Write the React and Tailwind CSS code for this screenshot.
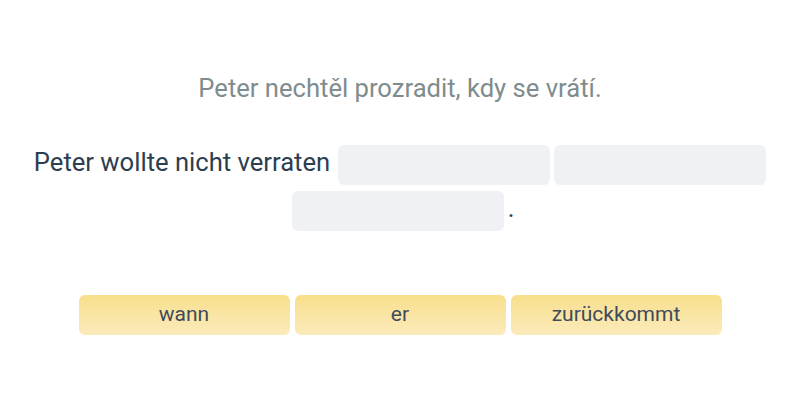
import React from 'react';

const words = ['wann', 'er', 'zurückkommt'];

function Blank({ className = '' }) {
  return <div className={`h-10 w-[212px] rounded-md bg-[#f0f1f5] ${className}`} />;
}

export default function App() {
  return (
    <div className="h-[400px] w-[800px] bg-white font-['Roboto',sans-serif]">
      <div className="pt-[72px] text-center text-[25.6px] leading-8 text-[#7f8c8d]">
        Peter nechtěl prozradit, kdy se vrátí.
      </div>

      <div className="mt-[41px] flex flex-wrap items-start justify-center gap-x-1 gap-y-1.5 px-6">
        <span className="mr-1 text-[25.6px] leading-[34px] text-[#2c3e50]">Peter wollte nicht verraten</span>
        <Blank />
        <Blank />
        <Blank className="ml-[6px]" />
        <span className="text-[25.6px] leading-[34px] text-[#2c3e50]">.</span>
      </div>

      <div className="mt-16 flex justify-center gap-[5px]">
        {words.map((w) => (
          <button
            key={w}
            className="h-10 w-[211px] rounded-md bg-gradient-to-b from-[#f8df8c] to-[#fbebbb] text-[21px] text-[#3f4b5b]"
          >
            {w}
          </button>
        ))}
      </div>
    </div>
  );
}
